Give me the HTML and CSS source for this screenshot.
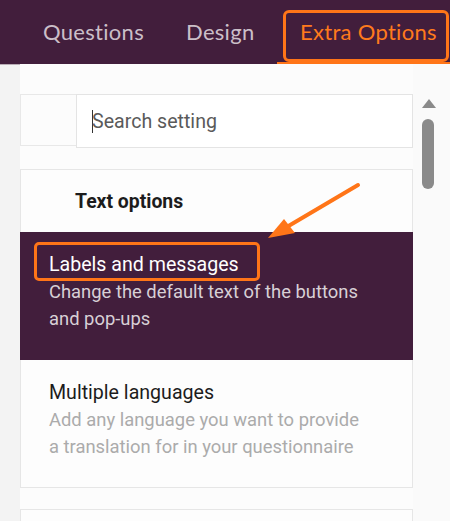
FILE: index.html
```html
<!DOCTYPE html>
<html>
<head>
  <meta charset="utf-8">
  <link rel="stylesheet" href="styles.css">
</head>
<body>
<div class="topbar">
  <a class="tab tab-questions">Questions</a>
  <a class="tab tab-design">Design</a>
  <a class="tab active">Extra Options</a>
  <span class="tab-mark"></span>
</div>
<div class="main">
  <div class="gutter"></div>
  <div class="panel">
    <div class="search-row">
      <div class="search-side"></div>
      <div class="search-box"><span class="caret"></span>Search setting</div>
    </div>
    <div class="card">
      <h3 class="card-title">Text options</h3>
      <div class="option selected">
        <p class="option-name">Labels and messages</p>
        <p class="option-desc">Change the default text of the buttons and pop-ups</p>
        <span class="option-mark"></span>
      </div>
      <div class="option">
        <p class="option-name">Multiple languages</p>
        <p class="option-desc">Add any language you want to provide a translation for in your questionnaire</p>
      </div>
    </div>
    <div class="card next"></div>
    <svg class="arrow" width="120" height="80" viewBox="0 0 120 80">
      <line x1="108" y1="15" x2="30" y2="61" stroke="#ff7518" stroke-width="4" stroke-linecap="round"/>
      <polygon points="18,68 34,49 45,63" fill="#ff7518"/>
    </svg>
  </div>
  <div class="scroll">
    <span class="scroll-up"></span>
    <span class="scroll-thumb"></span>
  </div>
</div>
</body>
</html>
```

FILE: styles.css
```css
body {
  margin: 0;
  background: #f3f3f3;
  font-family: "Roboto", sans-serif;
  overflow: hidden;
}

.topbar {
  position: relative;
  height: 64px;
  background: #421e3c;
  display: flex;
  align-items: stretch;
  padding-left: 43px;
  box-shadow: 0 1px 0 #b9adb6;
}
.tab {
  font-family: "Lato", sans-serif;
  font-size: 22px;
  letter-spacing: 0.3px;
  color: #cbbfc8;
  display: flex;
  align-items: center;
  padding-bottom: 2px;
}
.tab-questions {
  width: 143px;
}
.tab-design {
  width: 114px;
}
.tab.active {
  color: #ff7a1c;
}
.tab-mark {
  position: absolute;
  left: 283px;
  top: 10px;
  width: 160px;
  height: 46px;
  border: 3px solid #ff7518;
  border-radius: 6px;
}
.tab-mark::after {
  content: "";
  position: absolute;
  left: -9px;
  right: -6px;
  bottom: -6px;
  height: 3px;
  background: #ff7518;
}

.main {
  display: flex;
  height: 457px;
  overflow: hidden;
}
.gutter {
  width: 20px;
  background: #f3f3f3;
}
.panel {
  position: relative;
  width: 393px;
  background: #fcfcfc;
  padding-top: 30px;
}
.scroll {
  position: relative;
  width: 37px;
  background: #fafafa;
}

.search-row {
  display: flex;
  align-items: flex-start;
  height: 54px;
}
.search-side {
  width: 55px;
  height: 50px;
  border: 1px solid #e8e8e8;
  border-right: 0;
}
.search-box {
  flex: 1;
  height: 52px;
  border: 1px solid #e4e4e4;
  background: #fff;
  display: flex;
  align-items: center;
  padding-left: 15px;
  font-size: 19.6px;
  color: #5a5a5a;
}
.caret {
  width: 1px;
  height: 23px;
  background: #333;
  margin-right: -1px;
}

.card {
  margin-top: 21px;
  border: 1px solid #e6e6e6;
  background: #fdfdfd;
}
.card.next {
  height: 40px;
}
.card-title {
  margin: 0;
  height: 62px;
  padding-left: 54px;
  display: flex;
  align-items: center;
  font-size: 19.4px;
  font-weight: 700;
  color: #1c1c1c;
}
.option {
  position: relative;
  padding: 19px 40px 27px 28px;
}
.option.selected {
  background: #421e3c;
  margin: 0 -1px;
  padding-left: 29px;
  padding-bottom: 28px;
}
.option p {
  margin: 0;
  line-height: 27px;
}
.option-name {
  font-size: 19.6px;
  color: #1c1c1c;
}
.option-desc {
  font-size: 18.4px;
  color: #ababab;
}
.selected .option-name {
  color: #fff;
}
.selected .option-desc {
  color: #d8d0d6;
}
.option-mark {
  position: absolute;
  left: 14px;
  top: 10px;
  width: 220px;
  height: 33px;
  border: 3px solid #ff7518;
  border-radius: 5px;
}

.arrow {
  position: absolute;
  left: 230px;
  top: 106px;
}

.scroll-up {
  position: absolute;
  left: 9px;
  top: 35px;
  border-left: 7px solid transparent;
  border-right: 7px solid transparent;
  border-bottom: 9px solid #8a8a8a;
}
.scroll-thumb {
  position: absolute;
  left: 9px;
  top: 55px;
  width: 12px;
  height: 70px;
  border-radius: 6px;
  background: #8a8a8a;
}
```
